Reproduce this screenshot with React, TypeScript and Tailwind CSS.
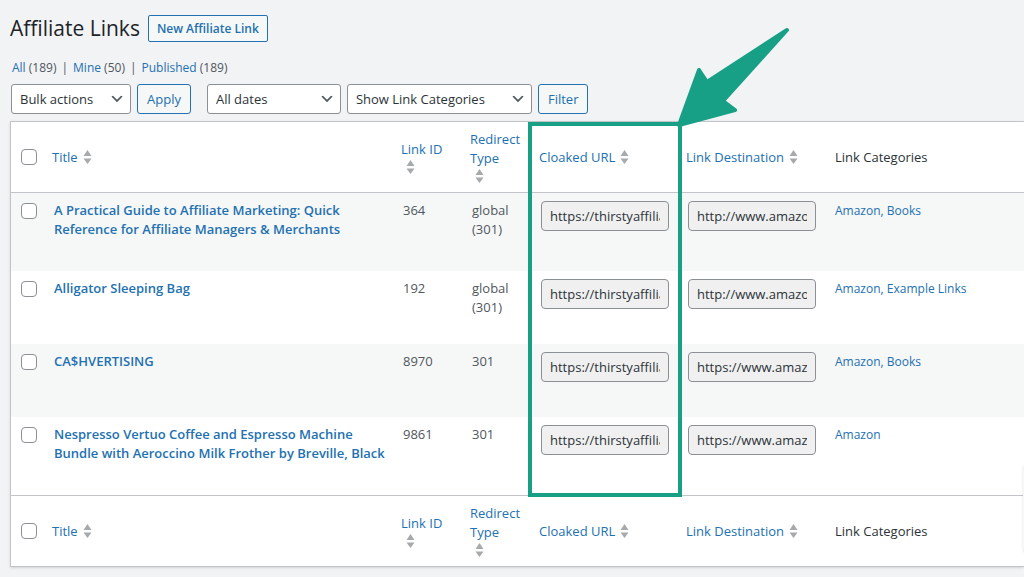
import type { ReactNode } from "react";

const views = [
  { label: "All", count: 189 },
  { label: "Mine", count: 50 },
  { label: "Published", count: 189 },
];

const columns = [
  { label: "Title", sortable: true },
  { label: "Link ID", sortable: true },
  { label: "Redirect Type", sortable: true },
  { label: "Cloaked URL", sortable: true },
  { label: "Link Destination", sortable: true },
  { label: "Link Categories", sortable: false },
];

const links = [
  {
    id: 364,
    title: "A Practical Guide to Affiliate Marketing: Quick Reference for Affiliate Managers & Merchants",
    redirect: "global (301)",
    cloaked: "https://thirstyaffiliates.com",
    destination: "http://www.amazon.com",
    categories: ["Amazon", "Books"],
  },
  {
    id: 192,
    title: "Alligator Sleeping Bag",
    redirect: "global (301)",
    cloaked: "https://thirstyaffiliates.com",
    destination: "http://www.amazon.com",
    categories: ["Amazon", "Example Links"],
  },
  {
    id: 8970,
    title: "CA$HVERTISING",
    redirect: "301",
    cloaked: "https://thirstyaffiliates.com",
    destination: "https://www.amazon.com",
    categories: ["Amazon", "Books"],
  },
  {
    id: 9861,
    title: "Nespresso Vertuo Coffee and Espresso Machine Bundle with Aeroccino Milk Frother by Breville, Black",
    redirect: "301",
    cloaked: "https://thirstyaffiliates.com",
    destination: "https://www.amazon.com",
    categories: ["Amazon"],
  },
];

function SortIcon() {
  return (
    <svg className="ml-[5px] h-4 w-[9px] shrink-0 fill-[#a7aaad]" viewBox="0 0 9 16" aria-hidden="true">
      <path d="M4.5 1 8.5 7h-8z" />
      <path d="M.5 9.5h8l-4 5.5z" />
    </svg>
  );
}

function Checkbox({ label }: { label: string }) {
  return (
    <input
      type="checkbox"
      aria-label={label}
      className="block size-4 appearance-none rounded border border-[#8c8f94] bg-white checked:bg-[#2271b1]"
    />
  );
}

function Select({ label, width, children }: { label: string; width: string; children: ReactNode }) {
  return (
    <span className={`relative ${width}`}>
      <select
        aria-label={label}
        className="h-[30px] w-full appearance-none rounded-[3px] border border-[#8c8f94] bg-white pr-6 pl-2 text-[#2c3338]"
      >
        {children}
      </select>
      <svg
        className="pointer-events-none absolute top-[7px] right-[6px] size-4 fill-[#50575e]"
        viewBox="0 0 20 20"
        aria-hidden="true"
      >
        <path d="M5 6l5 5 5-5 2 1-7 7-7-7 2-1z" />
      </svg>
    </span>
  );
}

function ActionButton({ children }: { children: ReactNode }) {
  return (
    <button
      type="button"
      className="h-[30px] rounded-[3px] border border-[#2271b1] bg-[#f6f7f7] px-[9px] text-[#2271b1]"
    >
      {children}
    </button>
  );
}

function HeadingRow({ border, label }: { border: string; label: string }) {
  return (
    <tr>
      <td className={`${border} border-[#c3c4c7] pl-[10px]`}>
        <Checkbox label={label} />
      </td>
      {columns.map((column) => (
        <th
          key={column.label}
          scope="col"
          className={`${border} border-[#c3c4c7] py-2 text-left font-normal ${column.sortable ? "px-2" : "px-[10px]"}`}
        >
          {column.sortable ? (
            <a href="#" className="flex flex-wrap items-center text-[#2271b1]">
              <span>{column.label}</span>
              <SortIcon />
            </a>
          ) : (
            column.label
          )}
        </th>
      ))}
    </tr>
  );
}

function UrlField({ label, value }: { label: string; value: string }) {
  return (
    <input
      type="text"
      readOnly
      aria-label={label}
      value={value}
      className="block h-[30px] w-full rounded-[4px] border border-[#8c8f94] bg-[#f0f0f1] px-2 text-[#2c3338]"
    />
  );
}

export default function App() {
  return (
    <div className="relative min-h-screen overflow-hidden bg-[#f2f3f5] pl-[10px] font-['Open_Sans',sans-serif] text-[13px] leading-[19px] text-[#2c3338]">
      <div className="flex items-center gap-2 pt-[13px]">
        <h1 className="text-[21px] leading-[30px] text-[#1d2327]">Affiliate Links</h1>
        <a
          href="#"
          className="rounded-[2px] border border-[#2271b1] bg-[#f6f7f7] px-2 py-[3px] text-[12px] font-semibold text-[#2271b1]"
        >
          New Affiliate Link
        </a>
      </div>

      <ul className="mt-[15px] flex pl-[2px] text-[12px] text-[#50575e]">
        {views.map((view, i) => (
          <li key={view.label}>
            {i > 0 && <span className="px-[5px]">|</span>}
            <a href="#" className="text-[#2271b1]">
              {view.label} <span className="text-[#50575e]">({view.count})</span>
            </a>
          </li>
        ))}
      </ul>

      <div className="mt-[7px] flex gap-[6px] pl-px">
        <Select label="Bulk actions" width="w-[120px]">
          <option>Bulk actions</option>
        </Select>
        <ActionButton>Apply</ActionButton>
        <div className="ml-[10px] flex gap-[6px]">
          <Select label="Filter by date" width="w-[134px]">
            <option>All dates</option>
          </Select>
          <Select label="Filter by category" width="w-[185px]">
            <option>Show Link Categories</option>
          </Select>
          <ActionButton>Filter</ActionButton>
        </div>
      </div>

      <div className="relative mt-[7px] border border-r-0 border-[#c3c4c7] bg-white shadow-sm">
        <table className="w-full table-fixed border-separate border-spacing-0">
          <colgroup>
            <col className="w-[33px]" />
            <col className="w-[349px]" />
            <col className="w-[69px]" />
            <col className="w-[69px]" />
            <col className="w-[147px]" />
            <col className="w-[147px]" />
            <col />
          </colgroup>
          <thead>
            <HeadingRow border="border-b" label="Select all" />
          </thead>
          <tbody>
            {links.map((link) => (
              <tr key={link.id} className="h-[73px] align-top text-[#50575e] odd:bg-[#f6f7f7]">
                <td className="pt-[10px] pl-[10px]">
                  <Checkbox label={`Select ${link.title}`} />
                </td>
                <td className="pt-2 pb-8 pl-[10px]">
                  <a href="#" className="block font-semibold text-[#2271b1]">
                    {link.title}
                  </a>
                </td>
                <td className="px-[10px] pt-2">{link.id}</td>
                <td className="px-[10px] pt-2">{link.redirect}</td>
                <td className="pt-2 pr-[9px] pl-[10px]">
                  <UrlField label="Cloaked URL" value={link.cloaked} />
                </td>
                <td className="pt-2 pr-[9px] pl-[10px]">
                  <UrlField label="Link destination" value={link.destination} />
                </td>
                <td className="px-[10px] pt-2 text-[12px] text-[#2271b1]">
                  {link.categories.map((category, i) => (
                    <span key={category}>
                      {i > 0 && ", "}
                      <a href="#">{category}</a>
                    </span>
                  ))}
                </td>
              </tr>
            ))}
          </tbody>
          <tfoot>
            <HeadingRow border="border-t" label="Select all, bottom" />
          </tfoot>
        </table>

        {/* Cloaked URL column callout */}
        <div className="pointer-events-none absolute top-0 bottom-[69px] left-[517px] w-[154px] border-4 border-[#17a086]" />
        <svg
          className="pointer-events-none absolute -top-[98px] left-[661px] h-[108px] w-[124px] fill-[#17a086] stroke-[#17a086]"
          viewBox="0 0 124 108"
          strokeWidth="4"
          strokeLinejoin="round"
          aria-hidden="true"
        >
          <path d="M7 101 27 46l8 12L115 6 51 77l12 9z" />
        </svg>

        {/* Edge of the collapsed side panel */}
        <div className="absolute -right-2 bottom-[14px] h-[88px] w-[9px] rounded-l bg-[#f6f7f7] shadow" />
      </div>
    </div>
  );
}
